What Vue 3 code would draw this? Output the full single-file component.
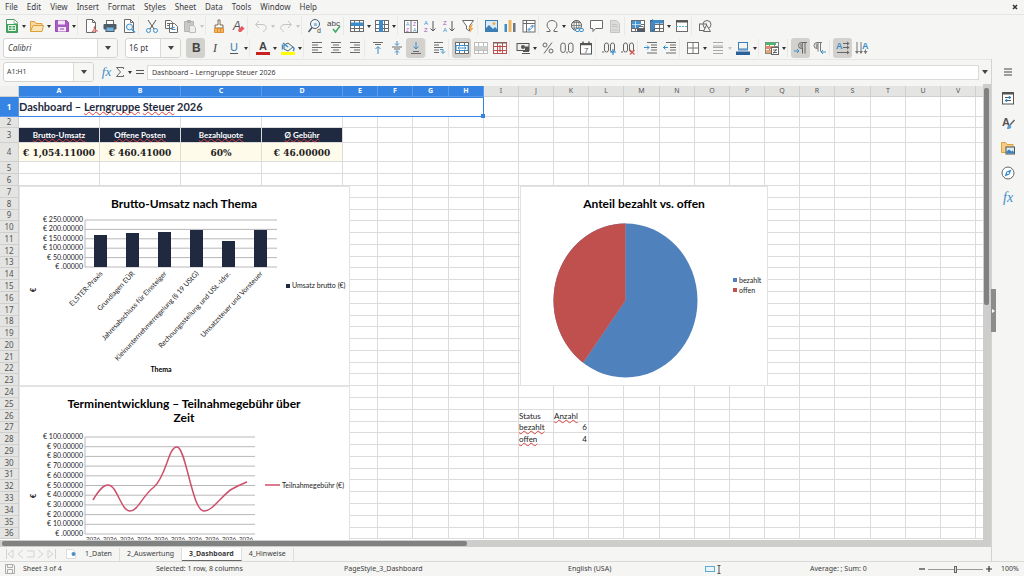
<script setup>
const menus = ['File', 'Edit', 'View', 'Insert', 'Format', 'Styles', 'Sheet', 'Data', 'Tools', 'Window', 'Help']

const g = '#6b6b6b'
const blue = '#3b8ec8'
const light = '#c4c4c2'
const lines = (list, c) => list.map(([x1, x2, y]) => `<path d="M${x1} ${y}H${x2}" stroke="${c || g}"/>`).join('')
const table = (c) => `<rect x=".5" y="1.5" width="13" height="11" fill="#fff" stroke="${c}"/><path d="M.5 5.500h13M.5 9.500h13M4.500 1.500v11M9.500 1.500v11" stroke="${c}"/>`
const page = (c) => `<path d="M2.500 .5h6l3 3v10h-9z" fill="#fff" stroke="${c}"/><path d="M8.500 .5v3h3" stroke="${c}"/>`
const word = (t, x, y, s, c, extra = '') => `<text x="${x}" y="${y}" font-size="${s}" fill="${c}" font-family="Liberation Sans, sans-serif" ${extra}>${t}</text>`

const icons = {
  new: `<path d="M1.500 .5h8l3 3v10h-11z" fill="#fff" stroke="#4a9a60"/><path d="M9 .5v4h4" fill="#fff" stroke="#8bc79b"/><path d="M2 5h10v8H2z" fill="#3fa55b"/><path d="M3.500 6.500h7v5h-7zM3.500 9h7M7 6.500v5" stroke="#e9f6ed"/>`,
  open: `<path d="M.5 12.500v-10h4l1.500 2h6v2" fill="#f6d9a0" stroke="#dba13c"/><path d="M.5 12.500l2.500-6h10.500l-1.500 6z" fill="#fbe3b4" stroke="#dba13c"/>`,
  save: `<path d="M.5 1.500h11l2 2v9h-13z" fill="#a95bc4" stroke="#9a4bb5"/><rect x="3" y="1.500" width="7" height="4" fill="#f3e6f7"/><rect x="3" y="8" width="8" height="4.500" fill="#f3e6f7"/><path d="M5 10h4" stroke="#9a4bb5"/>`,
  pdf: page(g) + `<path d="M8 13c2-2 3-4 2.500-5.500-1 1 0 3 3 4.500-2-.5-4 0-5.500 1z" stroke="#d9534f" fill="#f5f5f4"/>`,
  print: `<rect x="3.500" y="1.500" width="7" height="4" fill="#fff" stroke="${g}"/><rect x=".5" y="5" width="13" height="5.500" rx="1" fill="#4f5b66"/><rect x="3" y="8" width="8" height="4.500" fill="#6fb1df" stroke="#4f5b66"/>`,
  preview: page(g) + `<circle cx="7.500" cy="8" r="3" fill="#e7f3fb" stroke="${blue}"/><path d="M10 10.500l3 3" stroke="${blue}" stroke-width="1.500"/>`,
  cut: `<path d="M3 1l6 9M11 1l-6 9" stroke="#555"/><circle cx="3.500" cy="11.500" r="2" stroke="${blue}"/><circle cx="10.500" cy="11.500" r="2" stroke="${blue}"/>`,
  copy: `<path d="M1.500 1.500h5l2 2v6h-7zM5.500 4.500h5l3 3v6h-8z" fill="#fff" stroke="${g}"/><path d="M3 4.500h3M3 6.500h2" stroke="${g}"/><path d="M7.500 8.500h3M7.500 10.500h4" stroke="${blue}"/>`,
  paste: `<path d="M1.500 2.500h9v10h-9z" fill="#c9c9c7" stroke="#b5b5b3"/><path d="M4 1h4v3H4z" fill="#b0b0ae"/><path d="M6.500 6.500h4l2 2v5h-6z" fill="#eee" stroke="#bbb"/>`,
  clone: `<path d="M6 1h2v5h3v3H3V6h3z" fill="#fff" stroke="#7a6a50"/><path d="M2.500 9.500h9v4h-9z" fill="#f3b562" stroke="#dd9031"/><path d="M5.500 10v3M8.500 10v3" stroke="#dd9031"/>`,
  clear: word('A', 2, 11, 12, '#555', 'font-style="italic"') + `<path d="M7 11l4-4 2.500 2.500-3.500 3.500H8z" fill="#e8585f"/>`,
  undo: `<path d="M5 2L1.500 5.500 5 9M2 5.500h6c6 0 5 6 1 7" stroke="${light}"/>`,
  redo: `<path d="M9 2l3.500 3.500L9 9M12 5.500H6c-6 0-5 6-1 7" stroke="${light}"/>`,
  find: `<circle cx="7" cy="5" r="4.500" fill="#eef7fc" stroke="#4b5a66"/><path d="M4 8.500l-3.500 4.500" stroke="#4b5a66" stroke-width="1.500"/>` + word('a', 5.500, 7, 6, blue) + word('d', 9, 14, 7, '#444'),
  spell: word('abc', 0, 7, 8, '#444') + `<path d="M6 10l2.500 3L13 7" stroke="#3fa66a" stroke-width="1.500"/>`,
  row: table(g) + `<rect x="1" y="3.500" width="12" height="3.500" fill="#3c8ccc"/>`,
  column: table(g) + `<rect x="4" y="1" width="4" height="12" fill="#3c8ccc"/>`,
  sort: `<rect x=".5" y="1.500" width="13" height="12" fill="#fff" stroke="${g}"/><path d="M0 1.500h14M7 2v11" stroke="${g}"/>` + word('A', 2, 7, 5, blue) + word('Z', 2, 13, 5, '#a855c0') + word('Z', 9, 7, 5, '#a855c0') + word('A', 9, 13, 5, blue),
  asc: word('A', 1, 6, 6, blue) + word('Z', 1, 13, 6, '#a855c0') + `<path d="M10 2v10M7.500 9.500L10 12l2.500-2.500" stroke="#555"/>`,
  desc: word('Z', 1, 6, 6, '#a855c0') + word('A', 1, 13, 6, blue) + `<path d="M10 2v10M7.500 9.500L10 12l2.500-2.500" stroke="#555"/>`,
  filter: `<path d="M1.500 1.500h11L8.500 7v5l-3-2V7z" fill="#fff" stroke="${g}"/><path d="M10 5.500L7 10h2.500l-1 4 4-5H10l2-3.500z" fill="#f0a84e"/>`,
  image: `<rect x="1.500" y="1.500" width="12" height="11" fill="#d9edf9" stroke="#3c7dae"/><path d="M2 12V9l3-3 4 4 2-2 2 2v2z" fill="#3c80b8"/><circle cx="10" cy="4.500" r="1.500" fill="#f0b04a"/>`,
  chart: `<rect x="1.500" y="5" width="2.500" height="8" fill="#3c8ccc"/><rect x="5.500" y="1" width="3" height="12" fill="#efb75d"/><rect x="10" y="4" width="2.500" height="9" fill="#6b7783"/>`,
  pivot: `<rect x="1" y="1.500" width="12" height="11.500" fill="#fff" stroke="${g}"/><path d="M1 4.500h12M4.500 1.500v11.500" stroke="${g}"/><path d="M6.500 10.500c3 0 4-1 4-4M8.500 8l2-2 2 2M8 8.500l-2 2 2 2" stroke="${blue}"/>`,
  omega: `<path d="M1.500 12.500h3.500v-1.500C0 7 2 1.500 7 1.500S14 7 9 11v1.500h3.500" stroke="#666"/>`,
  link: `<circle cx="6.500" cy="6.500" r="5" stroke="#555"/><path d="M1.500 6.500h10M6.500 1.500v10M2.500 3.500h8M2.500 9h8" stroke="#666" stroke-width=".7"/><ellipse cx="6.500" cy="6.500" rx="2.500" ry="5" stroke="#666" stroke-width=".7"/><rect x="5.500" y="9.500" width="4" height="3" rx="1.500" fill="#fff" stroke="${blue}"/><rect x="9.500" y="9.500" width="4" height="3" rx="1.500" fill="#fff" stroke="${blue}"/>`,
  comment: `<path d="M1.500 1.500h12v8h-7L4 12.500v-3H1.500z" fill="#fff" stroke="${g}"/>`,
  header: `<path d="M2.500 1.500h6l3 3v9h-9z" fill="#dcdcda" stroke="${light}"/><path d="M4 5.500h5M4 7.500h6M4 11h6" stroke="${light}"/>`,
  area: table(g) + `<path d="M1 2h9v7H1z" fill="#4794cf"/><path d="M1 5.500h9M4.500 2v7" stroke="#fff" stroke-width=".6"/><rect x="6" y="9" width="8" height="4" fill="#4f5b66"/><rect x="8" y="7.500" width="4" height="2" fill="#fff" stroke="${g}"/>`,
  freeze: table(g) + `<path d="M1 1h12v3.500H1zM1 4h3.500v8.500H1z" fill="#3c8ccc"/><path d="M0 3l3-2.500M2 12l3-2" stroke="#245d8c"/>`,
  split: `<rect x="1.500" y="1.500" width="11" height="11" fill="#fff" stroke="${g}"/><path d="M1 2.500h12" stroke="#555" stroke-width="2"/><path d="M1 7.500h12" stroke="#56b0bf" stroke-dasharray="2 1"/>`,
  shapes: `<rect x="1.500" y="5" width="7" height="6.500" stroke="${g}"/><circle cx="9" cy="5.500" r="4" stroke="${g}"/><path d="M8.500 6l4 6.500h-7z" fill="#f5f5f4" stroke="${g}"/>`,
  bold: word('B', 3, 11, 12, '#444', 'font-weight="700"'),
  italic: word('I', 5, 11, 12, '#444', 'font-style="italic" style="font-family:Liberation Serif,serif"'),
  underline: word('U', 3, 10, 11, '#3d7fae') + `<path d="M3 12.500h8" stroke="#555"/>`,
  color: word('A', 3, 9, 11, '#444', 'font-weight="700"') + `<rect x="0" y="11" width="14" height="3" fill="#c9211e"/>`,
  fill: `<path d="M3 4l4-2 5 4-5 4-4-2z" fill="#e7f1f8" stroke="#566"/><path d="M2 2l5 4M1.500 3.500v5M12 6c2 2 1 3 0 4" stroke="${blue}" stroke-width="1.500"/><rect x="0" y="11" width="14" height="3" fill="#ffff00"/>`,
  left: lines([[2, 12, 1.500], [2, 8, 4], [2, 12, 6.500], [2, 8, 9], [2, 12, 11.500]]),
  center: lines([[2, 12, 1.500], [4, 10, 4], [2, 12, 6.500], [4, 10, 9], [2, 12, 11.500]]),
  right: lines([[2, 12, 1.500], [6, 12, 4], [2, 12, 6.500], [6, 12, 9], [2, 12, 11.500]]),
  top: lines([[2, 12, 1.500], [4, 10, 3.500]]) + `<path d="M7 13V6M4.500 8L7 5.500 9.500 8" stroke="${blue}"/>`,
  middle: lines([[2, 12, 6], [4, 10, 8]]) + `<path d="M7 0v4M5 2.500l2 2 2-2M7 14v-4M5 11.500l2-2 2 2" stroke="${blue}"/>`,
  bottom: lines([[4, 10, 10.500], [2, 12, 12.500]]) + `<path d="M7 1v7M4.500 5.500L7 8l2.500-2.500" stroke="${blue}"/>`,
  wrap: lines([[2, 11, 1.500], [2, 7, 4], [2, 11, 6.500], [2, 7, 9], [2, 7, 11.500]]) + `<path d="M8 8.500h3v3M9 10.500l2 2 2-2" stroke="${blue}"/>`,
  merge: table(g) + `<rect x="1" y="4.500" width="12" height="5" fill="#fff" stroke="${blue}"/><path d="M3 7h8M4.500 5.500L3 7l1.500 1.500M9.500 5.500L11 7 9.500 8.500" stroke="${blue}"/>`,
  mergeOff: table('#bdbdbb') + `<rect x="1" y="5" width="12" height="4" fill="#cfcfcd"/>`,
  unmerge: table('#c0504d') + `<path d="M0 2h14" stroke="#666"/><path d="M7 4v7" stroke="#c9302c"/>`,
  currency: `<rect x="1" y="2.500" width="12" height="7" fill="#eee" stroke="#555"/><circle cx="7" cy="6" r="2" fill="#555"/><path d="M9 5.500h4v4H9z" fill="#555"/><path d="M6 12.500h8M7 10.500h6" stroke="#555"/>`,
  percent: `<circle cx="4" cy="4" r="2" stroke="#666"/><circle cx="10" cy="10" r="2" stroke="#666"/><path d="M11 1.500L3 12.500" stroke="#666"/>`,
  number: `<rect x=".8" y="2" width="4.500" height="9.500" rx="2.200" stroke="#666"/><path d="M7 10.500v2" stroke="#666"/><rect x="8.500" y="2" width="4.500" height="9.500" rx="2.200" stroke="#666"/>`,
  date: `<rect x="1.500" y="2.500" width="11" height="10.500" fill="#fff" stroke="#555"/><path d="M1 3.500h12M4 .5v3M10 .5v3" stroke="#555" stroke-width="1.500"/>` + word('7', 5, 12, 8, '#555'),
  addDec: `<path d="M1 10v2" stroke="#666"/><rect x="2.500" y="2" width="4" height="9" rx="2" stroke="#666"/><rect x="8.500" y="2" width="4" height="9" rx="2" stroke="#666"/><path d="M11 8v6M8 11h6" stroke="${blue}" stroke-width="1.200"/>`,
  delDec: `<path d="M1 10v2" stroke="#666"/><rect x="2.500" y="2" width="4" height="9" rx="2" stroke="#666"/><rect x="8.500" y="2" width="4" height="9" rx="2" stroke="#666"/><path d="M9 9l4.500 4.500M13.500 9L9 13.500" stroke="#d9534f" stroke-width="1.200"/>`,
  indent: lines([[3, 13, 1.500], [7, 13, 4], [7, 13, 6.500], [7, 13, 9], [3, 13, 12]]) + `<path d="M0 6.500h5M3 4.500l2 2-2 2" stroke="${blue}"/>`,
  outdent: lines([[3, 13, 1.500], [7, 13, 4], [7, 13, 6.500], [7, 13, 9], [3, 13, 12]]) + `<path d="M0 6.500h5M2.500 4.500l-2 2 2 2" stroke="${blue}"/>`,
  borders: `<rect x="1.500" y="1.500" width="11" height="11" fill="#fff" stroke="#777"/><path d="M7 1.500v11M1.500 7h11" stroke="#777"/>`,
  lineStyle: lines([[2, 12, 1.500], [2, 12, 5], [2, 12, 6.500], [2, 12, 9.500], [2, 12, 12.500]], '#a9a9a7'),
  lineColor: `<rect x="2.500" y="1.500" width="9" height="6.500" fill="#f5f5f4" stroke="#3c7db4"/><path d="M2 9h10" stroke="#3c7db4"/><rect x="0" y="10.500" width="14" height="3.500" fill="#2a6099"/>`,
  cond: table('#888') + `<rect x="1" y="1.500" width="10" height="2.500" fill="#4cb86f"/><rect x="1" y="5" width="8" height="3" fill="#e58a6a"/><rect x="1" y="9" width="5" height="3" fill="#e9a66f"/><rect x="6.500" y="6.500" width="7" height="7" fill="#fff" stroke="#666"/><path d="M8 9h4M8 11.500h4M11.500 8l-3 4.500" stroke="#666"/>`,
  ltr: `<path d="M13 1.500H7.500a3 3 0 0 0 0 6H8M8.500 1.500v11M11 1.500v11" stroke="#666"/><path d="M5.500 2.500h3v4.500h-2z" fill="#999"/><path d="M0 10h5M3 8l2 2-2 2" stroke="${blue}"/>`,
  rtl: `<path d="M9 1.500H4a3 3 0 0 0 0 6h.5M5 1.500v9M7.500 1.500v9" stroke="#777"/><path d="M2.500 2.500h2.500v4.500h-2z" fill="#999"/><path d="M8 11h5M10 9l-2 2 2 2" stroke="${blue}"/>`,
  dirH: word('A', 0, 8, 9, blue, 'font-weight="700"') + `<path d="M7 2.500h5M7 6.500h5M1 11.500h11" stroke="#666"/><path d="M11 .5l2.500 2L11 4.500zM11 4.500l2.500 2-2.500 2zM11 9.500l2.500 2-2.500 2z" fill="#666"/>`,
  dirV: word('A', 7, 8, 9, blue, 'font-weight="700"') + `<path d="M2 1v11M6 1v11M10.500 8.500v4" stroke="#777"/><path d="M0 10h4l-2 3zM4 10h4l-2 3zM8.500 10h4l-2 3z" fill="#777"/>`,
  properties: `<rect x="1.500" y="1.500" width="11" height="11.500" fill="#fff" stroke="#555"/><path d="M1 2.500h12" stroke="#555" stroke-width="2"/><path d="M4 6.500h6M4 9.500h6" stroke="#555"/><path d="M8.500 5v3M5.500 8v3" stroke="${blue}" stroke-width="1.500"/>`,
  styles: word('A', 1, 10, 11, '#555', 'font-weight="700"') + `<path d="M13.500 4L9 9" stroke="#666" stroke-width="1.500"/><path d="M6 13c0-3 2-5 4-3.500 1 2-1 4-4 3.500z" fill="#5a9fd4"/>`,
  gallery: `<path d="M.5 11.500v-10h4l1.500 2h6v8z" fill="#f4cc84" stroke="#dba13c"/><rect x="5" y="6" width="8.500" height="7" fill="#d9edf9" stroke="#555"/><path d="M5.500 12.500v-2l2.500-2 2.500 2 1-1 2 2v1z" fill="#3c80b8"/>`,
  navigator: `<circle cx="7" cy="7" r="6" fill="#fff" stroke="#666"/><path d="M10.500 3.500L8.500 8.500l-5 2 2-5z" fill="#3c8ccc"/><circle cx="7" cy="7" r="1" fill="#fff"/>`,
  functions: word('fx', 2, 11, 14, blue, 'font-style="italic" style="font-family:Liberation Serif,serif"'),
}

const sep = { sep: true }
const b = (name, label, opts = {}) => ({ name, label, ...opts })
const caret = { caret: true }
const standard = [
  b('new', 'New', caret), b('open', 'Open', caret), b('save', 'Save', caret), sep,
  b('pdf', 'Export as PDF'), b('print', 'Print'), b('preview', 'Print preview'), sep,
  b('cut', 'Cut'), b('copy', 'Copy'), b('paste', 'Paste', { caret: true, off: true }), sep,
  b('clone', 'Clone formatting'), b('clear', 'Clear formatting'), sep,
  b('undo', 'Undo', { caret: true, off: true }), b('redo', 'Redo', { caret: true, off: true }), sep,
  b('find', 'Find and replace'), b('spell', 'Spelling'), sep,
  b('row', 'Row', caret), b('column', 'Column', caret), sep,
  b('sort', 'Sort'), b('asc', 'Sort ascending'), b('desc', 'Sort descending'), b('filter', 'AutoFilter'), sep,
  b('image', 'Insert image'), b('chart', 'Insert chart'), b('pivot', 'Pivot table'), sep,
  b('omega', 'Special character', caret), b('link', 'Hyperlink'), b('comment', 'Comment'), b('header', 'Headers and footers', { off: true }), sep,
  b('area', 'Print area'), b('freeze', 'Freeze', caret), b('split', 'Split window'), sep,
  b('shapes', 'Draw functions'),
]
const formatting = [
  b('bold', 'Bold', { on: true }), b('italic', 'Italic'), b('underline', 'Underline', caret), sep,
  b('color', 'Font color', caret), b('fill', 'Background color', caret), sep,
  b('left', 'Align left'), b('center', 'Center'), b('right', 'Align right'), sep,
  b('top', 'Align top'), b('middle', 'Center vertically'), b('bottom', 'Align bottom', { on: true }), sep,
  b('wrap', 'Wrap text'), sep,
  b('merge', 'Merge and center', { on: true }), b('mergeOff', 'Merge cells'), b('unmerge', 'Unmerge cells'), sep,
  b('currency', 'Currency', caret), b('percent', 'Percent'), b('number', 'Number'), b('date', 'Date'), sep,
  b('addDec', 'Add decimal place'), b('delDec', 'Delete decimal place'), sep,
  b('indent', 'Increase indent'), b('outdent', 'Decrease indent'), sep,
  b('borders', 'Borders', caret), b('lineStyle', 'Border style', { caret: true, off: true }), b('lineColor', 'Border color', caret), sep,
  b('cond', 'Conditional', caret), sep,
  b('ltr', 'Left to right', { on: true }), b('rtl', 'Right to left'), sep,
  b('dirH', 'Horizontal text', { on: true }), b('dirV', 'Vertical text'),
]
const panels = [b('properties', 'Properties'), b('styles', 'Styles'), b('gallery', 'Gallery'), b('navigator', 'Navigator'), b('functions', 'Functions')]

const columns = [...'ABCDEFGHIJKLMNOPQRSTUV', '']
const columnClass = (i) => (i < 4 ? 'wide' : ['G', 'M', 'S'].includes(columns[i]) ? 'mid' : 'slim')
const titles = ['Brutto-Umsatz', 'Offene Posten', 'Bezahlquote', 'Ø Gebühr']
const values = ['€ 1,054.11000', '€ 460.41000', '60%', '€ 46.00000']
const status = { 26: ['Status', 'Anzahl'], 27: ['bezahlt', '6'], 28: ['offen', '4'] }
const rows = Array.from({ length: 32 }, (_, i) => i + 5)
const rowClass = (n) => (n % 9 === 0 || n % 9 === 4 ? 'short' : 'norm')

const bars = [
  ['ELSTER-Praxis', 49], ['Grundlagen EÜR', 47], ['Jahresabschluss für Einsteiger', 46],
  ['Kleinunternehmerregelung (§ 19 UStG)', 44], ['Rechnungsstellung und USt.-Idnr.', 55], ['Umsatzsteuer und Vorsteuer', 44],
].map(([label, y], i) => ({ label, y, x: 81 + i * 32 }))
const barAxis = ['€ 250.00000', '€ 200.00000', '€ 150.00000', '€ 100.00000', '€ 50.00000', '€ .00000']
const lineAxis = ['€ 100.00000', '€ 90.00000', '€ 80.00000', '€ 70.00000', '€ 60.00000', '€ 50.00000', '€ 40.00000', '€ 30.00000', '€ 20.00000', '€ 10.00000', '€ .00000']
const tabs = ['1_Daten', '2_Auswertung', '3_Dashboard', '4_Hinweise']
</script>

<template>
  <div class="app">
    <header class="menubar">
      <nav class="menus"><button v-for="m in menus" :key="m" type="button">{{ m }}</button></nav>
      <button class="close" type="button" aria-label="Close document">
        <svg width="6" height="6" viewBox="0 0 6 6"><path d="M1 1l4 4M5 1L1 5" stroke="#333" stroke-width="1.500" /></svg>
      </button>
    </header>

    <div class="toolbar">
      <template v-for="(t, i) in standard" :key="i">
        <span v-if="t.sep" class="sep"></span>
        <template v-else>
          <button type="button" class="tool" :aria-label="t.label"><svg width="14" height="14" viewBox="0 0 14 14" fill="none" v-html="icons[t.name]"></svg></button>
          <button v-if="t.caret" type="button" class="caret" :class="{ off: t.off }" :aria-label="t.label + ' options'"></button>
        </template>
      </template>
    </div>

    <div class="toolbar format">
      <div class="combo font">
        <input aria-label="Font name" value="Calibri" /><button type="button" aria-label="Font list"><i class="arrow"></i></button>
      </div>
      <div class="combo size">
        <input aria-label="Font size" value="16 pt" /><button type="button" aria-label="Size list"><i class="arrow"></i></button>
      </div>
      <template v-for="(t, i) in formatting" :key="i">
        <span v-if="t.sep" class="sep"></span>
        <template v-else>
          <button type="button" class="tool" :class="{ on: t.on }" :aria-label="t.label"><svg width="14" height="14" viewBox="0 0 14 14" fill="none" v-html="icons[t.name]"></svg></button>
          <button v-if="t.caret" type="button" class="caret" :class="{ off: t.off }" :aria-label="t.label + ' options'"></button>
        </template>
      </template>
    </div>

    <div class="body">
      <main class="work">
        <div class="formula">
          <div class="combo name">
            <input aria-label="Name box" value="A1:H1" /><button type="button" aria-label="Named ranges"><i class="arrow"></i></button>
          </div>
          <button type="button" class="fx" aria-label="Function wizard">fx</button>
          <button type="button" class="sum" aria-label="Select function">
            <svg width="10" height="12" viewBox="0 0 10 12" fill="none"><path d="M8.500 3V1.500h-7L5.500 6l-4 4.500h7V9" stroke="#666" /></svg>
          </button>
          <button type="button" class="caret" aria-label="Function options"></button>
          <button type="button" class="equal" aria-label="Formula"><svg width="8" height="6" viewBox="0 0 8 6"><path d="M0 1.500h8M0 4.500h8" stroke="#555" /></svg></button>
          <input class="content" aria-label="Input line" value="Dashboard – Lerngruppe Steuer 2026" />
          <button type="button" class="expand" aria-label="Expand formula bar"><i class="arrow"></i></button>
        </div>

        <div class="gridrow">
          <div class="sheet">
            <table>
              <colgroup>
                <col class="rowhead" />
                <col v-for="(c, i) in columns" :key="i" :class="columnClass(i)" />
              </colgroup>
              <thead>
                <tr>
                  <th class="corner"></th>
                  <th v-for="(c, i) in columns" :key="i" scope="col" :class="{ picked: i < 8 }">{{ c }}</th>
                </tr>
              </thead>
              <tbody>
                <tr class="r1">
                  <th scope="row" class="picked">1</th>
                  <td colspan="8" class="title">Dashboard – <u>Lerngruppe</u> <u>Steuer</u> 2026<i class="handle"></i></td>
                  <td v-for="n in 15" :key="n"></td>
                </tr>
                <tr class="r2"><th scope="row">2</th><td v-for="n in 23" :key="n"></td></tr>
                <tr class="r3">
                  <th scope="row">3</th>
                  <td v-for="t in titles" :key="t" class="kpi"><u>{{ t }}</u></td>
                  <td v-for="n in 19" :key="n"></td>
                </tr>
                <tr class="r4">
                  <th scope="row">4</th>
                  <td v-for="v in values" :key="v" class="value">{{ v }}</td>
                  <td v-for="n in 19" :key="n"></td>
                </tr>
                <tr v-for="r in rows" :key="r" :class="rowClass(r)">
                  <th scope="row">{{ r }}</th>
                  <template v-for="n in 23" :key="n">
                    <td v-if="status[r] && n === 10"><u v-if="r > 26">{{ status[r][0] }}</u><template v-else>{{ status[r][0] }}</template></td>
                    <td v-else-if="status[r] && n === 11" :class="{ num: r > 26 }"><u v-if="r === 26">{{ status[r][1] }}</u><template v-else>{{ status[r][1] }}</template></td>
                    <td v-else></td>
                  </template>
                </tr>
              </tbody>
            </table>

            <svg class="plot bar" width="331" height="200" viewBox="0 0 331 200">
              <rect x=".5" y=".5" width="330" height="199" fill="#fff" stroke="#e2e2e2" />
              <text class="head" x="165" y="22" text-anchor="middle">Brutto-Umsatz nach Thema</text>
              <g v-for="(a, i) in barAxis" :key="a">
                <line x1="66" x2="258" :y1="34 + i * 9.4" :y2="34 + i * 9.4" />
                <text x="64" :y="36 + i * 9.4" text-anchor="end">{{ a }}</text>
              </g>
              <line x1="66" x2="66" y1="34" y2="81" />
              <g v-for="p in bars" :key="p.label">
                <rect :x="p.x - 6" :y="p.y" width="13" :height="81 - p.y" fill="#1f2a40" />
                <text :transform="`translate(${p.x + 3} 88) rotate(-47)`" text-anchor="end">{{ p.label }}</text>
              </g>
              <text class="strong" transform="translate(17 106) rotate(-90)">€</text>
              <text class="strong" x="142" y="186" text-anchor="middle">Thema</text>
              <rect x="267" y="98" width="4" height="4" fill="#1f2a40" />
              <text x="273" y="102">Umsatz brutto (€)</text>
            </svg>

            <svg class="plot curve" width="331" height="200" viewBox="0 0 331 200">
              <rect x=".5" y=".5" width="330" height="199" fill="#fff" stroke="#e2e2e2" />
              <text class="head" x="165" y="22" text-anchor="middle">Terminentwicklung – Teilnahmegebühr über</text>
              <text class="head" x="165" y="36" text-anchor="middle">Zeit</text>
              <g v-for="(a, i) in lineAxis" :key="a">
                <line x1="66" x2="236" :y1="51 + i * 9.7" :y2="51 + i * 9.7" />
                <text x="64" :y="53 + i * 9.7" text-anchor="end">{{ a }}</text>
              </g>
              <line x1="66" x2="66" y1="51" y2="148" />
              <path d="M74 114C80 104 84 99 89 99c9 0 13 26 22 26 8 0 13-16 24-24C148 89 149 61 158 61c9 0 15 64 27 64 9 0 18-16 28-22 7-4 10-5 15-7" fill="none" stroke="#cd4f6c" stroke-width="1.500" />
              <text v-for="n in 10" :key="n" class="year" :x="57 + n * 17" y="155" text-anchor="middle">2026</text>
              <text class="strong" transform="translate(17 112) rotate(-90)">€</text>
              <path d="M246 99h15" stroke="#cd4f6c" stroke-width="1.500" />
              <text x="263" y="102">Teilnahmegebühr (€)</text>
            </svg>

            <svg class="plot pie" width="248" height="200" viewBox="0 0 248 200">
              <rect x=".5" y=".5" width="247" height="199" fill="#fff" stroke="#e2e2e2" />
              <text class="head" x="124" y="22" text-anchor="middle">Anteil bezahlt vs. offen</text>
              <ellipse cx="105.500" cy="114.500" rx="72" ry="77" fill="#4f81bd" />
              <path d="M105.500 114.500L63.200 176.800A72 77 0 0 1 105.500 37.500z" fill="#c0504d" />
              <path d="M105.500 114.500v-77M105.500 114.500L63.200 176.800" stroke="#9a86a0" stroke-width=".5" />
              <rect x="213" y="92" width="4" height="4" fill="#4f81bd" /><text x="219" y="97">bezahlt</text>
              <rect x="213" y="102" width="4" height="4" fill="#c0504d" /><text x="219" y="107">offen</text>
            </svg>
          </div>
          <div class="vscroll"><i></i></div>
        </div>
        <div class="hscroll"><i></i></div>

        <div class="tabs">
          <div class="nav">
            <svg width="52" height="12" viewBox="0 0 52 12" fill="none" stroke="#d3d3cf"><path d="M1.500 1v10M8 2L3 6l5 4zM18 2l-5 4 5 4M22 3h7v6h-7M33 2l5 4-5 4M43 2l5 4-5 4zM50.500 1v10" /></svg>
          </div>
          <button type="button" class="add" aria-label="Add sheet">
            <svg width="12" height="12" viewBox="0 0 12 12"><path d="M1.500 1.500h6l3 3v6h-9z" fill="#fff" stroke="#ddd" /><circle cx="8.500" cy="6" r="2" fill="#4a90c8" /></svg>
          </button>
          <button v-for="t in tabs" :key="t" type="button" class="tab" :class="{ active: t === '3_Dashboard' }">{{ t }}</button>
        </div>
      </main>

      <aside class="sidebar">
        <button type="button" class="grip" aria-label="Hide sidebar"></button>
        <button type="button" class="burger" aria-label="Sidebar settings">
          <svg width="8" height="8" viewBox="0 0 8 8"><path d="M0 1h8M0 4h8M0 7h8" stroke="#444" stroke-width="1.200" /></svg>
        </button>
        <button v-for="p in panels" :key="p.name" type="button" class="panel" :aria-label="p.label"><svg width="14" height="14" viewBox="0 0 14 14" fill="none" v-html="icons[p.name]"></svg></button>
      </aside>
    </div>

    <footer class="status">
      <span class="disk"><svg width="10" height="10" viewBox="0 0 10 10" fill="none" stroke="#aaa"><path d="M.5 .5h8l1 1v8h-9zM2.500 .5v3h5v-3M2.500 9.500v-4h5v4" /></svg></span>
      <span class="count">Sheet 3 of 4</span>
      <span class="picked-info">Selected: 1 row, 8 columns</span>
      <span class="style">PageStyle_3_Dashboard</span>
      <span class="lang">English (USA)</span>
      <span class="mode"><svg width="17" height="9" viewBox="0 0 17 9" fill="none"><rect x=".5" y="1.500" width="9" height="5" fill="#e9f5fa" stroke="#5aaecb" /><path d="M12.500 .5h3M14 .5v8M12.500 8.500h3" stroke="#555" /></svg></span>
      <span class="func">Average: ; Sum: 0</span>
      <span class="zoom">
        <button type="button" aria-label="Zoom out"><svg width="6" height="6" viewBox="0 0 6 6"><path d="M0 3h6" stroke="#333" stroke-width="1.200" /></svg></button>
        <input type="range" min="0" max="100" value="50" aria-label="Zoom" />
        <button type="button" aria-label="Zoom in"><svg width="6" height="6" viewBox="0 0 6 6"><path d="M0 3h6M3 0v6" stroke="#333" stroke-width="1.200" /></svg></button>
      </span>
      <span class="percent">100%</span>
    </footer>
  </div>
</template>

<style>
html, body { height: 100%; margin: 0; overflow: hidden; }
</style>

<style scoped>
* { box-sizing: border-box; }
.app {
  display: flex; flex-direction: column; height: 100vh; overflow: hidden;
  background: #f5f5f4; color: #3c3c3c; font: 8px/12px "Noto Sans", sans-serif;
}
button { border: 0; padding: 0; background: none; font: inherit; color: inherit; display: flex; align-items: center; justify-content: center; flex: none; }
input { font: inherit; color: inherit; outline: none; min-width: 0; }
svg { display: block; flex: none; overflow: visible; }

.menubar { display: flex; justify-content: space-between; align-items: center; height: 15px; border-bottom: 1px solid #e6e6e4; padding: 0 6px 0 5px; flex: none; }
.menus { display: flex; gap: 9px; }
.toolbar { display: flex; align-items: center; height: 22px; padding-left: 2px; flex: none; }
.format { padding-left: 3px; }
.tool { width: 19px; height: 20px; border-radius: 3px; }
.tool.on { background: #d3d1cd; }
.caret { width: 6px; height: 12px; }
.caret::before { content: ""; border: 2px solid transparent; border-top: 3px solid #333; border-bottom: 0; }
.caret.off::before { border-top-color: #c4c4c2; }
.sep { width: 4px; height: 18px; border-left: 1px solid #e8e8e6; flex: none; }
.arrow { border: 3px solid transparent; border-top: 4px solid #444; border-bottom: 0; }

.combo { display: flex; height: 20px; border: 1px solid #d6d4d1; border-radius: 3px; background: #fff; overflow: hidden; flex: none; }
.combo input { flex: 1; border: 0; padding: 0 4px; background: none; }
.combo button { width: 20px; border-left: 1px solid #dcdad7; background: #f7f7f6; }
.font { width: 115px; margin-right: 7px; }
.font input { font-style: italic; }
.size { width: 56px; margin-right: 5px; }
.size input { padding: 0 3px; }
.name { width: 91px; }
.name input { font-size: 7px; padding: 0 3px; }

.body { display: flex; flex: 1; min-height: 0; }
.work { display: flex; flex-direction: column; flex: 1; min-width: 0; }
.formula { display: flex; align-items: center; height: 25px; padding-left: 3px; border-top: 1px solid #e6e6e4; flex: none; }
.fx { width: 13px; margin-left: 6px; color: #3b8ec8; font: italic 13px/16px "Liberation Serif", serif; }
.sum { width: 14px; }
.equal { width: 14px; }
.content { flex: 1; height: 15px; border: 1px solid #dcdad7; padding: 0 4px; background: #fff; font-size: 7px; }
.expand { width: 12px; }

.gridrow { display: flex; flex: 1; min-height: 0; }
.sheet { position: relative; flex: 1; min-width: 0; overflow: hidden; background: #fff; margin-top: 2px; }
table { border-collapse: separate; border-spacing: 0; table-layout: fixed; width: 932px; }
.rowhead { width: 19px; }
.wide { width: 81px; }
.slim { width: 35px; }
.mid { width: 36px; }
th, td { padding: 0; white-space: nowrap; }
th { background: #e4e4e3; border-right: 1px solid #cfcfce; border-bottom: 1px solid #cfcfce; font-weight: 400; font-size: 8px; line-height: 10px; color: #555; }
td { border-right: 1px solid #dcdcdc; border-bottom: 1px solid #dcdcdc; font: 8px/10px Lato, sans-serif; color: #222; }
thead tr { height: 11px; }
thead th { font-size: 7px; }
th.corner { background: #f0f0ef; }
th.picked { background: #3584e4; border-color: #5b9be9; color: #fff; font-weight: 700; }
.r1 { height: 20px; }
.r2 { height: 11px; }
.r3 { height: 15px; }
.r4 { height: 19px; }
.norm { height: 12px; }
.short { height: 11px; }
td.title { position: relative; border: 1px solid #3584e4; border-left: 0; font: 700 11px/18px Lato, sans-serif; color: #1f2a40; }
.handle { position: absolute; right: -2px; bottom: -2px; width: 4px; height: 4px; background: #3584e4; }
u { text-decoration: underline wavy #e0413c 1px; text-underline-offset: 0; text-decoration-skip-ink: none; }
td.kpi { background: #1f2a40; color: #fff; text-align: center; font: 700 8px/13px Lato, sans-serif; }
td.value { background: #fffbeb; padding-top: 2px; text-align: center; font: 700 9px/16px "DejaVu Serif", serif; color: #222; }
.num { text-align: right; padding-right: 1px; }

.plot { position: absolute; font: 7px Lato, sans-serif; fill: #222; }
.plot line { stroke: #b8b8b8; stroke-width: 1px; }
.plot .head { font-size: 12px; font-weight: 700; fill: #000; }
.plot .year { font-size: 6px; }
.plot .strong { font-weight: 700; fill: #000; }
.bar { left: 19px; top: 100px; }
.curve { left: 19px; top: 300px; }
.pie { left: 520px; top: 100px; }

.vscroll { width: 8px; background: #cdcdcc; padding: 4px 2px 0 1px; flex: none; }
.vscroll i { display: block; height: 48%; border-radius: 2px; background: #7f8281; }
.hscroll { height: 7px; background: #cdcdcc; padding: 1px 0 1px 2px; flex: none; }
.hscroll i { display: block; width: 47%; height: 5px; border-radius: 2px; background: #7f8281; }

.tabs { display: flex; align-items: center; height: 14px; flex: none; font-size: 7px; }
.nav { width: 63px; padding-left: 5px; }
.add { width: 15px; }
.tab { height: 13px; padding: 0 7px; border-right: 1px solid #dededc; }
.tab.active { background: #fff; border-bottom: 1px solid #666; font-weight: 700; }

.sidebar { position: relative; width: 33px; border-left: 1px solid #d3d3d1; display: flex; flex-direction: column; align-items: center; flex: none; }
.burger { height: 26px; }
.panel { height: 25px; }
.grip { position: absolute; left: -1px; top: 230px; width: 5px; height: 43px; background: #8b8d8c; }
.grip::before { content: ""; border: 2px solid transparent; border-left: 3px solid #fff; border-right: 0; }

.status { display: flex; align-items: center; height: 15px; border-top: 1px solid #d9d9d7; white-space: nowrap; flex: none; font-size: 7px; }
.status span { flex: none; }
.disk { width: 23px; padding-left: 5px; }
.count { width: 133px; }
.picked-info { width: 188px; }
.status .style { flex: 1; }
.lang { width: 137px; }
.mode { width: 105px; }
.func { width: 109px; }
.status .zoom { display: flex; align-items: center; gap: 3px; width: 82px; }
.zoom input { appearance: none; width: 55px; height: 8px; margin: 0; background: linear-gradient(#999, #999) center / 100% 1px no-repeat; }
.zoom input::-webkit-slider-thumb { appearance: none; width: 3px; height: 7px; border: 1px solid #666; background: #ddd; }
.percent { width: 23px; }
</style>
